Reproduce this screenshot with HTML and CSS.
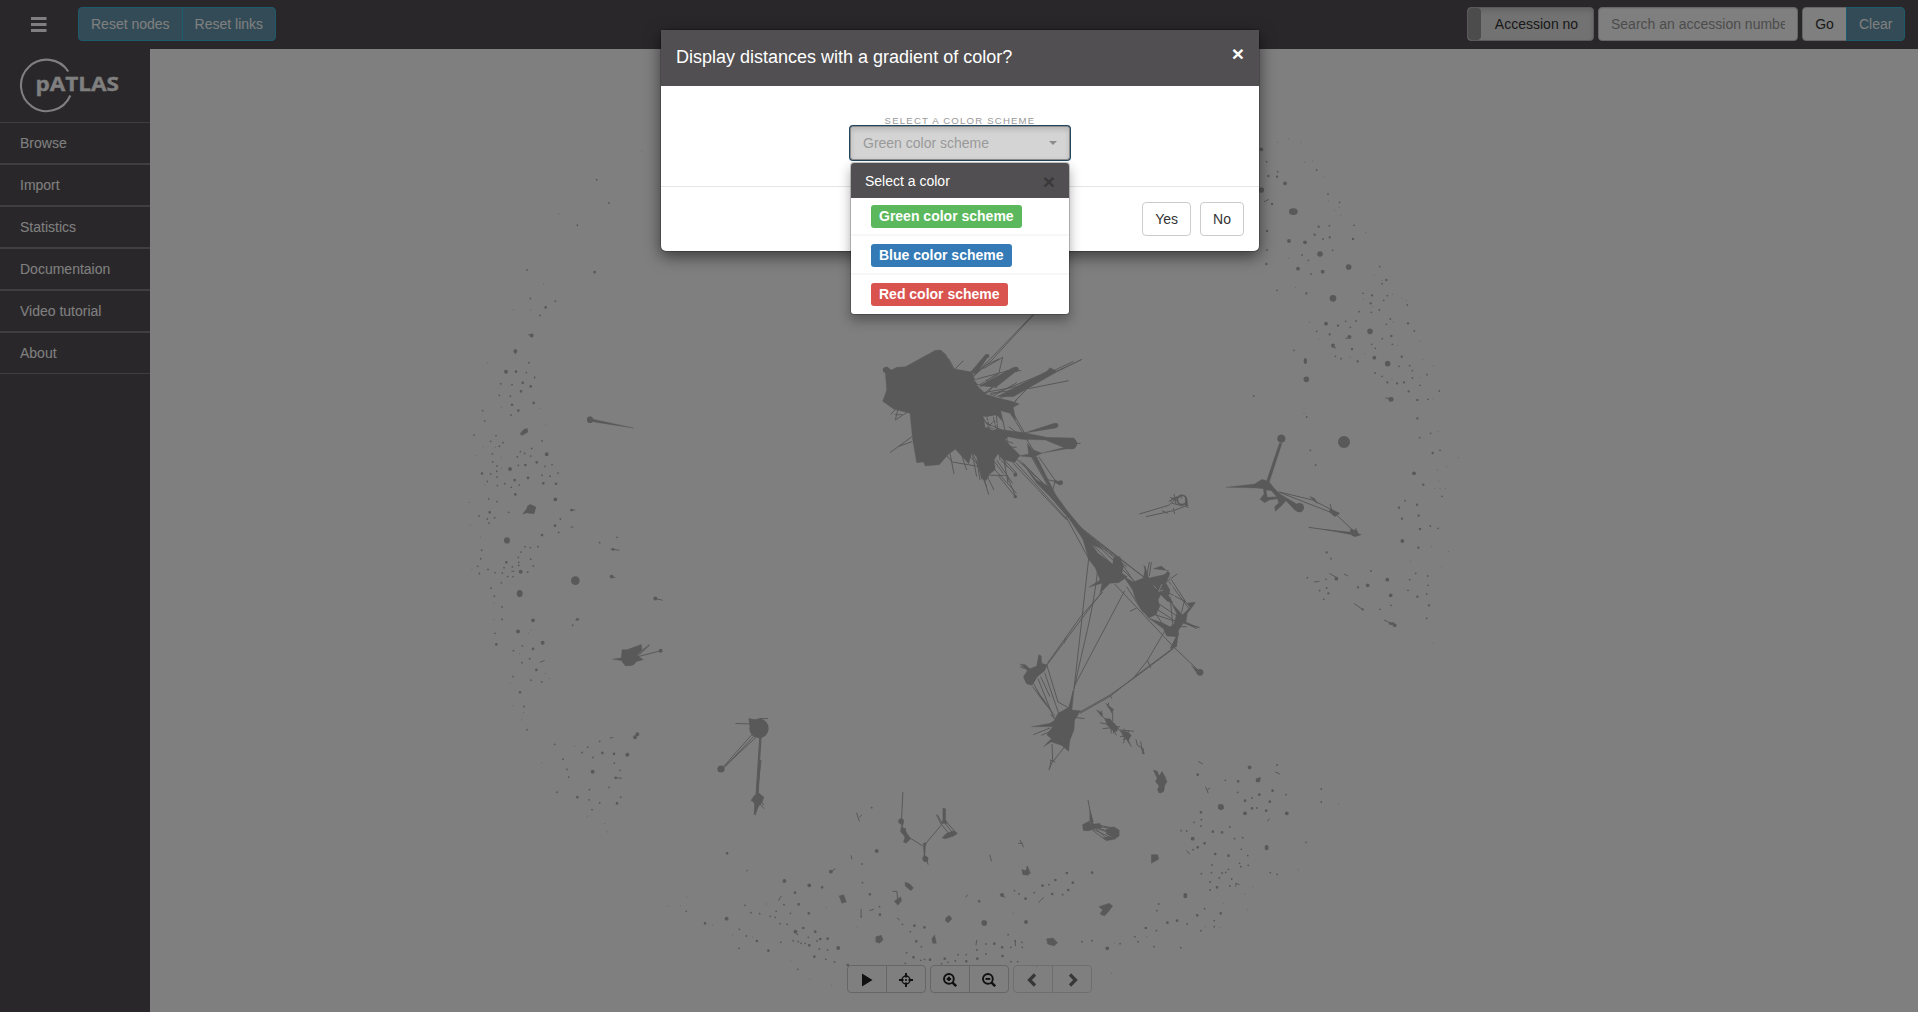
FILE: index.html
```html
<!DOCTYPE html>
<html lang="en">
<head>
<meta charset="utf-8">
<title>pATLAS</title>
<link rel="stylesheet" href="styles.css">
</head>
<body>
<div class="app">
  <header class="navbar">
    <button class="menu-toggle" aria-label="Menu"><svg width="16" height="16" viewBox="0 0 16 16"><path d="M0 1.500h15.500M0 7.500h15.500M0 13.500h15.500" stroke="currentColor" stroke-width="3"/></svg></button>
    <div class="btn-group reset-group">
      <button class="btn btn-info">Reset nodes</button><button class="btn btn-info">Reset links</button>
    </div>
    <div class="search">
      <div class="toggle"><span class="toggle-handle"></span><span class="toggle-text">Accession no</span></div>
      <input class="search-input" placeholder="Search an accession number">
      <div class="btn-group"><button class="btn btn-default go">Go</button><button class="btn btn-info clear">Clear</button></div>
    </div>
  </header>
  <div class="main">
    <nav class="sidebar">
      <div class="brand">
        <svg width="104" height="60" viewBox="0 0 104 60">
          <path d="M49.300 15.500A25.700 25.700 0 1 0 51.300 39.500" fill="none" stroke="currentColor" stroke-width="2.100"/>
          <text class="logo-text" x="16.500" y="35" textLength="83.500" lengthAdjust="spacingAndGlyphs">pATLAS</text>
        </svg>
      </div>
      <a class="nav-item">Browse</a>
      <a class="nav-item">Import</a>
      <a class="nav-item">Statistics</a>
      <a class="nav-item">Documentaion</a>
      <a class="nav-item">Video tutorial</a>
      <a class="nav-item">About</a>
    </nav>
    <section class="graph-area">
      <svg class="graph" viewBox="150 49 1768 963">
        <!-- central plasmid cluster and its bridges -->
        <g transform="translate(870 300) scale(.33333)">
          <path class="blob" d="M38 208L50 200L64 210L80 202L106 200L196 151L212 150L228 164L250 206L306 216L316 244L326 262L350 284L384 294L426 304L448 312L430 322L438 366L420 340L392 332L400 366L380 345L340 350L346 384L386 388L464 398L530 412L612 414L622 430L612 446L590 446L526 420L454 418L414 410L404 420L450 466L434 488L398 478L384 462L372 480L376 508L360 522L348 542L334 536L326 502L320 470L306 456L296 492L286 480L256 448L234 464L208 494L166 498L160 486L140 488L128 420L120 340L72 328L38 304L50 270L46 220Z"/>
          <path class="blob" d="M300 218L346 164L357 166L320 222ZM330 258L430 202L446 208L380 260ZM380 290L530 214L540 203L560 213L584 202L636 178L560 216L430 290ZM460 400L552 370L564 376L558 384ZM512 460L600 438L606 444ZM450 480L500 540L540 560L590 630L640 690L700 750L640 720L600 660L540 590L500 550ZM446 468L476 462L472 430L486 448L516 460L490 472ZM500 470L560 590L600 645L560 600L484 466ZM554 540L578 548L570 556L552 546Z"/>
          <path class="blob" d="M628 680L684 760L728 792L732 772L750 770L760 800L756 820L772 830L746 848L720 850L690 880L696 850L656 862L690 840L676 804L656 778ZM760 828L790 846L820 834L826 800L836 834L882 824L896 812L850 806L874 798L900 820L888 850L900 870L896 888L910 910L892 904L872 884L864 900L870 918L858 944L836 954L812 926L796 896L788 870ZM836 954L880 970L900 980L912 972L920 940L902 906L938 944L960 922L950 910L976 906L972 914L952 940L948 966L988 984L940 970L926 990L920 1040L900 1046L918 1010L890 1008L880 986ZM974 1104L999 1116L996 1126L984 1124L964 1096Z"/>
          <path class="blob" d="M450 1092L466 1094L480 1106L500 1098L506 1064L514 1068L514 1090L532 1094L524 1112L502 1130L486 1156L470 1152L460 1130L472 1112ZM486 1158L520 1196L556 1250L516 1200ZM552 1262L564 1240L596 1222L612 1170L606 1230L632 1232L614 1260L612 1290L600 1320L596 1354L574 1336L544 1326L520 1340L544 1316L530 1304L548 1280L484 1280L540 1270Z"/>
          <g class="links">
            <path d="M488 45L300 240M494 41L362 184L306 232M398 172L340 206M398 172L386 222L330 260M388 176L346 196L310 228M280 182L252 210M236 176L254 210M596 242L486 264L360 280M636 178L380 300M610 184L430 270M440 204L330 290M454 212L410 212M440 248L350 300M380 222L330 254M434 304L470 268M430 430L400 420M440 442L398 440M126 410L60 458M126 425L84 440M116 334L76 360L84 326M62 344L78 326M96 344L74 344M240 460L252 522M230 466L246 486L330 500M340 530L356 584M352 530L372 570M360 526L408 526M384 526L436 590M408 520L438 592M380 480L428 550M392 480L440 526M400 470L414 548M438 488L588 654M430 490L590 660M440 478L520 550L520 570M460 490L558 590M506 470L556 542L548 570M528 538L574 548M484 470L570 620M416 380L470 420M398 360L416 440M430 340L464 400M438 366L496 460M378 330L390 480M350 320L366 500M320 480L330 540M270 450L290 510"/>
            <path d="M588 650L656 776L612 1168M600 660L744 774L890 990M622 676L800 850M624 676L840 846M620 676L730 770M626 684L820 830M630 690L770 800M636 700L780 850M684 800C670 940 640 1030 612 1168M764 872L612 1160M694 878L530 1096M698 876L632 950L532 1090M734 852L912 1042M770 860L820 938M838 786L830 830M844 786L838 828M822 796L834 836M922 822L888 846M898 830L950 910M896 844L960 930M880 870L946 905M870 914L936 958M864 930L920 966M856 944L932 970M900 890L910 990M944 900L928 962M926 1000L912 1040M912 1042L982 1108M912 1042L792 1132L722 1188L630 1240M910 1046L790 1136L718 1186L630 1236M886 990L832 1082L792 1132M832 1080L842 1104M720 1186L726 1196M588 1012L582 1030M504 1136L552 1256M524 1118L566 1240M530 1094L564 1206L600 1226M490 1150L516 1196M512 1130L540 1190M610 1170L594 1240M644 1256L600 1250M490 1304L540 1284M514 1306L550 1290M546 1332L548 1384L536 1410M584 1340L548 1386M542 1244L560 1260M556 1386L540 1380M450 1100L464 1106M510 1066L514 1090M780 934L800 924M940 966L980 986M956 974L988 982M920 980L950 980M812 840L890 830M830 850L900 870"/>
            <path d="M300 250L380 262L350 240M310 240L430 208M330 280L440 260M350 290L530 218M340 290L400 230M410 330L440 300M340 360L400 420L440 470M350 390L420 470M370 400L410 500M390 400L440 480M330 400L440 520M300 440L350 560M320 450L440 580M340 440L400 520M290 460L340 510M306 456L320 530M310 360L380 340M340 355L400 450M370 350L386 420M350 370L400 392M340 392L374 362M350 350L362 400M606 430L632 430"/>
          </g>
          <path class="holes" d="M340 350L356 354L352 366L366 362L374 374L382 370M344 372L356 378L366 390L378 386M322 258L326 254M334 222L312 244M320 246L344 244M850 856L860 866M876 852L866 874L880 870M900 832L914 892M920 900L934 940"/>
          <g class="node"><circle cx="604" cy="431" r="17"/><circle cx="438" cy="208" r="8"/><circle cx="558" cy="376" r="7"/><circle cx="572" cy="548" r="7"/><circle cx="436" cy="590" r="5"/><circle cx="48" cy="210" r="9"/><circle cx="436" cy="524" r="6"/><circle cx="352" cy="168" r="6"/><circle cx="740" cy="780" r="11"/><circle cx="990" cy="1117" r="10"/><circle cx="900" cy="995" r="12"/><circle cx="480" cy="1136" r="16"/></g>
          <g class="links">
            <path d="M808 642L896 616L930 586M828 650L910 632L952 616M876 632L894 640M910 624L914 642M896 604L936 586M900 592L926 604M912 582L918 612M932 584L934 596M906 610L940 618M946 588L948 620L956 622M900 604L920 590M904 596L930 590"/>
            <path d="M680 1230L696 1248L720 1270L744 1286L770 1312L784 1340M696 1232L690 1246M708 1210L728 1236L728 1264M716 1208L714 1222M724 1230L732 1228M690 1268L738 1278M698 1286L750 1280M706 1256L740 1306M720 1260L724 1300M734 1270L730 1300M750 1290L792 1294M762 1286L776 1330M750 1310L778 1306M760 1330L770 1300M778 1290L760 1320M798 1318L802 1336L820 1346L820 1362M812 1324L816 1350"/>
          </g>
          <circle class="ring" cx="936" cy="600" r="14"/>
          <path class="blob" d="M682 1230L698 1240L696 1250ZM710 1212L730 1228L726 1240ZM704 1256L720 1256L732 1270L746 1284L738 1296L726 1290L712 1276ZM752 1292L774 1296L784 1306L774 1324L760 1310ZM814 1342L824 1362L818 1362ZM850 1410L862 1414L868 1430L876 1414L882 1434L890 1444L884 1458L882 1472L870 1480L862 1470L868 1456L856 1444L862 1436ZM946 592L952 604L954 618L944 614L950 602Z"/>
        </g>
        <!-- right hand satellites -->
        <g transform="translate(1130 130) scale(.33333)">
          <path class="blob" d="M288 1072L374 1062L396 1048L410 1052L448 940L456 940L418 1056L432 1074L450 1092L470 1104L500 1122L496 1142L468 1112L454 1128L436 1144L434 1130L446 1118L442 1106L418 1110L404 1118L390 1108L402 1092L400 1076L376 1074ZM408 1080L412 1102L440 1100L424 1082ZM540 1100L552 1104L564 1120ZM600 1136L630 1150L614 1160L598 1146ZM580 1198L660 1206L662 1196L676 1202L678 1194L684 1210L694 1214L676 1220L664 1214Z" fill-rule="evenodd"/>
          <path class="links" d="M600 1122L606 1142L670 1202M446 1086L610 1150M448 1086L548 1110L610 1142M536 1192L664 1210M672 1420L700 1440M762 1470L796 1486M540 1100L562 1120M598 1330L622 1344M552 1356L568 1354M402 216L416 208M646 626L664 620M604 650L618 654M642 1332L654 1338M766 804L784 806"/>
          <g class="node"><circle cx="454" cy="926" r="12.500"/><circle cx="642" cy="936" r="18"/><ellipse cx="490" cy="245" rx="13" ry="10"/><ellipse cx="526" cy="693" rx="5" ry="9"/><ellipse cx="783" cy="808" rx="8" ry="7"/><circle cx="609" cy="505" r="10"/><circle cx="508" cy="1133" r="14"/><circle cx="673" cy="1209" r="10"/><ellipse cx="785" cy="1481" rx="9" ry="4"/></g>
          <path class="dot d6" d="M656 411h.1M720 604h.1M570 372h.1M529 748h.1M773 701h.1M394 180h.1"/>
          <path class="dot d4" d="M465 160h.1M477 333h.1M504 416h.1M525 337h.1M578 425h.1M733 683h.1M852 1030h.1M817 1233h.1M588 581h.1M772 1349h.1M394 58h.1M713 1366h.1M609 646h.1M782 1396h.1M658 621h.1M619 1346h.1M794 1486h.1"/>
          <path class="dot d2" d="M415 138h.1M441 140h.1M426 222h.1M411 303h.1M409 402h.1M566 290h.1M554 314h.1M599 322h.1M669 327h.1M529 490h.1M599 613h.1M624 587h.1M666 657h.1M683 694h.1M722 520h.1M784 618h.1M815 680h.1M772 757h.1M801 760h.1M822 757h.1M836 784h.1M862 810h.1M862 865h.1M880 1064h.1M861 1124h.1M866 1157h.1M816 1166h.1M807 1133h.1M870 1197h.1M865 1253h.1M590 1267h.1M684 1372h.1M862 1400h.1M897 1426h.1M595 1390h.1M908 969h.1M769 450h.1M726 496h.1M834 580h.1M698 1438h.1"/>
          <path class="dot d1" d="M410 95h.1M443 125h.1M560 120h.1M594 192h.1M629 217h.1M598 287h.1M672 286h.1M608 361h.1M411 360h.1M516 375h.1M535 391h.1M543 432h.1M441 481h.1M749 410h.1M756 461h.1M699 490h.1M772 497h.1M761 511h.1M832 525h.1M687 545h.1M724 547h.1M748 540h.1M781 567h.1M769 583h.1M678 573h.1M647 574h.1M661 592h.1M560 604h.1M853 603h.1M757 626h.1M787 643h.1M736 655h.1M725 643h.1M616 679h.1M633 686h.1M492 661h.1M807 709h.1M839 707h.1M847 722h.1M891 734h.1M735 729h.1M756 739h.1M847 744h.1M870 766h.1M928 783h.1M894 808h.1M530 861h.1M371 798h.1M541 961h.1M557 1005h.1M902 910h.1M869 923h.1M930 961h.1M936 1099h.1M825 1112h.1M901 1188h.1M924 1195h.1M603 1286h.1M723 1323h.1M857 1330h.1M839 1349h.1M893 1338h.1M894 1366h.1M834 1381h.1M890 1392h.1M569 1382h.1M590 1374h.1M581 1408h.1M532 1343h.1M588 1348h.1M750 1438h.1M783 1426h.1M890 1465h.1M579 327h.1"/>
          <path class="dot d0" d="M512 38h.1M443 37h.1M524 97h.1M476 27h.1M548 94h.1M583 142h.1M596 214h.1M614 240h.1M627 232h.1M632 256h.1M707 308h.1M733 436h.1M756 451h.1M497 473h.1M788 493h.1M815 505h.1M828 512h.1M728 530h.1M538 577h.1M700 508h.1M869 634h.1M878 688h.1M910 708h.1M803 646h.1M566 628h.1M704 671h.1M660 682h.1M870 743h.1M522 851h.1M910 806h.1M924 905h.1M985 983h.1M950 1010h.1M922 1020h.1M926 1053h.1M915 1075h.1M930 1075h.1M946 1076h.1M905 1250h.1M956 1265h.1M841 1294h.1M935 1310h.1M476 385h.1M789 577h.1M786 747h.1M910 1540h.1"/>
        </g>
        <!-- left hand satellites -->
        <g transform="translate(460 140) scale(.33333 .44643)">
          <path class="blob" d="M382 622L392 619L402 626L440 632L520 645L440 636L398 631L384 632ZM458 1163L484 1160L486 1142L500 1142L544 1130L546 1142L530 1154L550 1164L530 1168L520 1176L496 1178L484 1166ZM188 838L204 822L210 816L228 822L222 838L208 834ZM180 658L192 648L202 646L204 654L186 662ZM866 1296L884 1298L890 1310L870 1314ZM890 1466L884 1468L874 1478L884 1486L882 1512L898 1490L906 1484L912 1472L898 1464Z"/>
          <path class="links" d="M530 1158L568 1132M520 1160L602 1144M530 1154L568 1130M826 1307L870 1308M878 1330L790 1404M884 1334L792 1406M888 1338L796 1402M900 1330L888 1470M904 1330L892 1470M902 1330L890 1470M898 1296L924 1296M892 1480L912 1498M452 916L478 919M580 1026L608 1031M450 1340L460 1338M522 1340L536 1330M466 1428L486 1430M240 1170L254 1166M450 978L466 980M330 829L346 829M205 436L216 438M166 468L166 480M332 867L341 867M346 1075L358 1073M154 966L164 966"/>
          <g class="node"><ellipse cx="390" cy="627" rx="9" ry="7"/><ellipse cx="346" cy="987" rx="13" ry="10"/><ellipse cx="141" cy="897" rx="9" ry="7"/><ellipse cx="179" cy="1016" rx="9" ry="8"/><ellipse cx="211" cy="827" rx="11" ry="10"/><ellipse cx="508" cy="1162" rx="21" ry="16"/><ellipse cx="897" cy="1318" rx="29" ry="22"/><ellipse cx="783" cy="1409" rx="11" ry="8"/><ellipse cx="890" cy="1476" rx="10" ry="9"/></g>
          <path class="dot d4" d="M215 438h.1M166 473h.1M150 737h.1M219 1076h.1M174 1101h.1M248 1126h.1M398 1415h.1M260 704h.1M286 805h.1M182 967h.1M532 1331h.1M502 1377h.1M602 1144h.1M138 519h.1M455 978h.1M586 1027h.1M525 1338h.1"/>
          <path class="dot d3" d="M404 296h.1M257 375h.1M168 519h.1M221 589h.1M175 606h.1M196 728h.1M204 757h.1M164 762h.1M166 794h.1M66 747h.1M230 722h.1M288 770h.1M250 769h.1M285 864h.1M89 834h.1M246 885h.1M139 946h.1M180 1237h.1M427 1373h.1M462 1375h.1M352 1472h.1M183 563h.1M212 552h.1M109 1130h.1M229 1187h.1M335 829h.1M471 1486h.1M467 1429h.1M352 1074h.1M459 917h.1M188 544h.1M156 593h.1M219 1140h.1"/>
          <path class="dot d1" d="M410 89h.1M447 141h.1M352 191h.1M201 291h.1M211 355h.1M286 361h.1M240 393h.1M207 499h.1M199 521h.1M224 532h.1M122 546h.1M156 548h.1M118 572h.1M151 574h.1M153 616h.1M68 606h.1M74 629h.1M42 661h.1M108 662h.1M92 675h.1M129 678h.1M118 686h.1M246 674h.1M215 691h.1M181 698h.1M194 702h.1M212 708h.1M172 710h.1M97 703h.1M98 721h.1M175 729h.1M111 730h.1M92 748h.1M110 742h.1M111 755h.1M82 765h.1M134 770h.1M112 774h.1M154 778h.1M178 773h.1M255 731h.1M276 727h.1M294 746h.1M246 751h.1M270 753h.1M86 804h.1M111 810h.1M146 834h.1M57 842h.1M82 849h.1M104 846h.1M87 858h.1M301 849h.1M296 879h.1M65 919h.1M62 938h.1M53 955h.1M58 971h.1M84 962h.1M105 969h.1M127 970h.1M132 958h.1M157 956h.1M175 935h.1M176 946h.1M176 953h.1M183 923h.1M195 911h.1M211 913h.1M234 911h.1M212 939h.1M220 954h.1M203 968h.1M143 978h.1M159 978h.1M124 992h.1M93 1004h.1M103 1022h.1M126 1046h.1M126 1074h.1M105 1105h.1M160 1144h.1M187 1133h.1M186 1171h.1M209 1162h.1M159 1202h.1M213 1210h.1M245 1214h.1M192 1269h.1M201 1321h.1M284 1354h.1M419 902h.1M471 890h.1M338 1087h.1M419 1347h.1M383 1360h.1M366 1372h.1M399 1383h.1M309 1387h.1M321 1410h.1M326 1427h.1M463 1396h.1M480 1412h.1M447 1450h.1M482 1472h.1M419 1485h.1M396 1500h.1M387 1478h.1M388 1455h.1M291 1461h.1"/>
          <path class="dot d0" d="M297 166h.1M250 322h.1M160 380h.1M212 381h.1M82 499h.1M124 599h.1M241 601h.1M257 639h.1M49 707h.1M69 687h.1M106 688h.1M124 711h.1M124 736h.1M74 773h.1M28 812h.1M31 863h.1M36 961h.1M61 890h.1M102 1038h.1M102 1074h.1M213 1098h.1M205 1105h.1M178 1151h.1M256 1195h.1M267 1206h.1M151 1217h.1M160 1267h.1M190 1283h.1M184 1299h.1M344 1358h.1M245 1395h.1M381 1515h.1M434 1531h.1M443 1550h.1M545 24h.1"/>
        </g>
        <!-- lower rim -->
        <g transform="translate(660 760) scale(.45918 .33333)">
          <path class="blob" d="M212 94L216 100L222 112L220 128L214 136L208 166L206 130L200 120L208 110ZM522 178L528 176L530 190L528 200L536 216L546 236L536 250L530 246L534 232L524 214L526 196ZM573 250L580 248L578 262L577 286L584 296L580 306L574 302L572 294L575 284ZM616 144L622 146L622 180L626 190L614 190L616 180ZM624 220L640 212L648 220L640 228L622 236L614 234ZM936 150L944 186L936 190ZM920 194L934 184L946 192L958 190L962 204L946 206L934 212H922ZM972 208L988 200L1000 210V228L990 238L972 242L966 232L984 230L972 222ZM788 328L796 334L800 318L806 336L802 346L790 344ZM956 440L978 430L986 438L976 456L968 468L958 462L964 450ZM534 366L544 372L552 384L546 392L534 378ZM510 424L524 410L526 422L518 436ZM1076 30L1086 48L1094 36L1100 50L1104 66L1096 78V96L1086 98L1088 80L1080 66L1084 52ZM842 536L856 534L866 548L858 558L844 552ZM622 474L630 466L636 476L628 488L622 484ZM702 482L712 484L710 496L702 494ZM470 530L482 526L486 540L478 550L470 546ZM390 408L400 404L406 426L396 430ZM1070 284L1084 284L1086 298L1070 310ZM1216 134L1226 134L1228 146L1220 150ZM1298 56L1308 52L1306 66L1298 66ZM592 536L598 524L602 550L594 550Z" fill-rule="evenodd"/>
          <path class="links" d="M220 0L212 100M218 0L214 96M214 110L226 136M206 112L198 124M529 96L526 180M540 230L572 258M578 252L612 196M580 296L584 314M620 180L642 214M616 182L636 216M602 164L612 192L630 222M604 164L614 190M612 196L618 184M532 232L542 236M932 120L942 190M428 158L434 184M434 172L440 164M784 240L792 262M780 250L790 250M718 284L722 304M506 394L516 394L518 426M368 338L382 326M258 422L264 408M740 402L752 412M824 428L836 412M1188 80L1194 100M1192 90L1198 84M1172 4L1182 12M438 468V446M456 452L466 448M690 540L688 556M416 286L418 298M1146 272L1154 282M1340 36L1350 42M1322 184L1328 176M666 412L670 404M774 542V558M1254 380V370L1262 374M790 330L808 340M800 318V344M516 474L522 480M852 0L848 28M960 200L990 208M948 194L988 204M938 206L970 240M944 208L980 232M950 204L990 224M956 206L980 214M946 202L968 230M188 334L192 329"/>
          <path class="dot d6" d="M1221 141h.1M706 489h.1M578 297h.1M933 203h.1M213 120h.1M525 184h.1M530 212h.1M1077 293h.1"/>
          <path class="dot d4" d="M1144 405h.1M1144 409h.1M1321 261h.1M1321 265h.1M325 376h.1M388 564h.1M472 273h.1M1160 236h.1M145 476h.1M271 363h.1M974 565h.1M372 335h.1M745 405h.1M1284 22h.1M1274 160h.1M1365 160h.1M797 486h.1M295 515h.1"/>
          <path class="dot d3" d="M146 280h.1M236 572h.1M211 543h.1M324 460h.1M353 382h.1M294 398h.1M457 403h.1M576 502h.1M554 497h.1M558 544h.1M728 551h.1M745 562h.1M941 338h.1M899 368h.1M886 339h.1M861 360h.1M854 402h.1M833 377h.1M889 390h.1M796 416h.1M1171 44h.1M1259 64h.1M1334 92h.1M1274 122h.1M1328 125h.1M1178 157h.1M1204 215h.1M1224 217h.1M1238 287h.1M1209 282h.1M1171 262h.1M1058 504h.1M1221 460h.1M1213 382h.1M1126 482h.1M1105 488h.1M302 433h.1M338 515h.1M312 504h.1M325 556h.1M336 590h.1M365 536h.1M349 537h.1M98 490h.1M695 424h.1M667 604h.1M691 596h.1M746 588h.1M620 596h.1M552 592h.1M588 599h.1M479 464h.1M409 615h.1M1320 152h.1M1289 145h.1M1305 104h.1M1186 250h.1M1170 466h.1"/>
          <path class="dot d1" d="M57 454h.1M185 436h.1M198 458h.1M217 461h.1M253 454h.1M240 469h.1M251 472h.1M284 460h.1M270 434h.1M261 491h.1M277 493h.1M173 508h.1M188 528h.1M172 565h.1M263 547h.1M290 542h.1M301 545h.1M307 550h.1M316 550h.1M299 523h.1M323 532h.1M342 543h.1M365 570h.1M361 598h.1M380 606h.1M347 567h.1M300 628h.1M441 368h.1M440 312h.1M461 143h.1M438 470h.1M478 440h.1M545 515h.1M528 493h.1M537 578h.1M569 560h.1M534 610h.1M576 598h.1M568 601h.1M613 611h.1M627 607h.1M643 603h.1M649 584h.1M667 584h.1M710 582h.1M710 552h.1M690 570h.1M758 524h.1M773 542h.1M788 547h.1M789 562h.1M764 562h.1M764 605h.1M779 605h.1M772 392h.1M782 402h.1M815 398h.1M847 374h.1M877 404h.1M919 545h.1M941 542h.1M1002 551h.1M1041 545h.1M1034 530h.1M1076 560h.1M1134 563h.1M1082 452h.1M1086 432h.1M1081 512h.1M1148 492h.1M1186 446h.1M1207 482h.1M1207 500h.1M1178 512h.1M1163 187h.1M1179 179h.1M1178 198h.1M1147 213h.1M1135 212h.1M1251 236h.1M1269 233h.1M1241 201h.1M1266 268h.1M1262 310h.1M1265 320h.1M1238 328h.1M1245 357h.1M1232 337h.1M1224 339h.1M1218 354h.1M1201 338h.1M1202 315h.1M1179 341h.1M1198 366h.1M1198 390h.1M1241 378h.1M1280 287h.1M1281 316h.1M1329 338h.1M1344 343h.1M1407 247h.1M1440 87h.1M1440 126h.1M1231 61h.1M1258 97h.1M1289 114h.1M1344 15h.1M1363 104h.1M1300 144h.1M1161 269h.1"/>
          <path class="dot d0" d="M18 438h.1M44 437h.1M58 411h.1M114 495h.1M158 525h.1M233 432h.1M201 531h.1M285 603h.1M326 658h.1M374 676h.1M362 442h.1M430 500h.1M1478 133h.1M1390 329h.1M1291 380h.1M1274 402h.1M1228 430h.1M1188 500h.1M1220 503h.1M983 640h.1M820 620h.1M770 460h.1M990 549h.1M1060 530h.1M1280 450h.1"/>
        </g>
      </svg>
      <div class="controls">
        <div class="btn-group">
          <button class="ctl"><svg width="14" height="14" viewBox="0 0 14 14"><path d="M2 .5L12.500 7L2 13.500Z" fill="currentColor"/></svg></button>
          <button class="ctl"><svg width="14" height="14" viewBox="0 0 14 14"><path d="M7 0v4.500M7 9.500v4.500M0 7h4.500M9.500 7h4.500" stroke="currentColor" stroke-width="1.900"/><circle cx="7" cy="7" r="4" fill="none" stroke="currentColor" stroke-width="1.400"/><path d="M7 6v2M6 7h2" stroke="currentColor"/></svg></button>
        </div>
        <div class="btn-group">
          <button class="ctl"><svg width="14" height="14" viewBox="0 0 14 14"><circle cx="5.900" cy="5.900" r="4.900" fill="none" stroke="currentColor" stroke-width="1.900"/><path d="M9.300 9.300L13.200 13.200" stroke="currentColor" stroke-width="2.500"/><path d="M5.900 3.700v4.400M3.700 5.900h4.400" stroke="currentColor" stroke-width="2"/></svg></button>
          <button class="ctl"><svg width="14" height="14" viewBox="0 0 14 14"><circle cx="5.900" cy="5.900" r="4.900" fill="none" stroke="currentColor" stroke-width="1.900"/><path d="M9.300 9.300L13.200 13.200" stroke="currentColor" stroke-width="2.500"/><path d="M3.500 5.900h4.800" stroke="currentColor" stroke-width="2"/></svg></button>
        </div>
        <div class="btn-group disabled">
          <button class="ctl"><svg width="14" height="14" viewBox="0 0 14 14"><path d="M9 1.500L3.500 7L9 12.500" fill="none" stroke="currentColor" stroke-width="3.200"/></svg></button>
          <button class="ctl"><svg width="14" height="14" viewBox="0 0 14 14"><path d="M5 1.500L10.500 7L5 12.500" fill="none" stroke="currentColor" stroke-width="3.200"/></svg></button>
        </div>
      </div>
    </section>
  </div>
</div>
<div class="backdrop">
  <div class="modal">
    <div class="modal-header"><h4 class="modal-title">Display distances with a gradient of color?</h4><button class="close">×</button></div>
    <div class="modal-body">
      <label class="field-label">Select a color scheme</label>
      <div class="select">
        <button class="select-btn">Green color scheme<span class="caret"></span></button>
        <div class="dropdown">
          <div class="dropdown-header">Select a color<span class="dropdown-close">×</span></div>
          <div class="option"><span class="label green">Green color scheme</span></div>
          <div class="option"><span class="label blue">Blue color scheme</span></div>
          <div class="option"><span class="label red">Red color scheme</span></div>
        </div>
      </div>
    </div>
    <div class="modal-footer"><button class="btn btn-default">Yes</button><button class="btn btn-default">No</button></div>
  </div>
</div>
</body>
</html>
```
FILE: styles.css
```css
* { box-sizing: border-box; }
body { margin: 0; font: 14px/20px "Liberation Sans", Arial, sans-serif; color: #333; overflow: hidden; }
button, input { font: inherit; margin: 0; }
.app { height: 100vh; display: flex; flex-direction: column; background: #fff; }
.navbar { height: 49px; flex: none; background: #524f54; display: flex; align-items: flex-start; padding: 7px 13px 0 0; }
.menu-toggle { margin: 10px 0 0 31px; padding: 0; border: 0; background: none; color: #fff; width: 16px; height: 16px; display: block; }
.menu-toggle svg { display: block; }
.btn-group { display: flex; }
.reset-group { margin-left: 31px; }
.btn { height: 34px; padding: 6px 12px; border: 1px solid #ccc; border-radius: 4px; background: #fff; color: #333; white-space: nowrap; }
.btn-info { background: #6496ac; border-color: #38b4d8; color: #fff; }
.btn-group .btn:first-child { border-radius: 4px 0 0 4px; }
.btn-group .btn:last-child { border-radius: 0 4px 4px 0; margin-left: -1px; }
.search { margin-left: auto; display: flex; gap: 4px; }
.toggle { width: 127px; height: 34px; border: 1px solid #b4b4b4; border-radius: 4px; background: #e4e4e4; display: flex; box-shadow: inset 0 3px 5px rgba(0,0,0,.125); }
.toggle-handle { width: 13px; background: #989898; border-radius: 4px; }
.toggle-text { flex: 1; text-align: center; padding: 6px 1px 0 0; }
.search-input { width: 200px; height: 34px; padding: 6px 12px; border: 1px solid #ccc; border-radius: 4px; box-shadow: inset 0 1px 1px rgba(0,0,0,.075); background: #fff; }
.search-input::placeholder { color: #999; opacity: 1; }
.go { width: 45px; padding: 6px 11px; }
.clear { width: 59px; }
.main { flex: 1; display: flex; min-height: 0; }
.sidebar { width: 150px; flex: none; background: #524f54; color: #fff; }
.brand { height: 73px; padding: 7px 0 0 19px; }
.logo-text { font: 700 19.5px "Open Sans", "Noto Sans", sans-serif; fill: currentColor; stroke: currentColor; stroke-width: .3px; }
.nav-item { display: block; padding: 10px 20px; border: solid #7f7c81; border-width: 1px 0; }
.graph-area { flex: 1; display: grid; min-width: 0; }
.graph, .controls { grid-area: 1 / 1; }
.graph { width: 100%; height: 100%; display: block; }
.blob, .node { fill: #b2b2b2; }
.blob { stroke: #b2b2b2; stroke-width: 1; }
.links, .dot, .holes, .ring { fill: none; stroke: #b2b2b2; }
.links, .links path, .dot, .holes { vector-effect: non-scaling-stroke; stroke-width: 1px; }
.ring { stroke-width: 5px; }
.holes { stroke: #fff; stroke-width: .9px; }
.dot { stroke-linecap: round; }
.d6 { stroke-width: 5.6px; }
.d4 { stroke-width: 3.9px; }
.d3 { stroke-width: 2.7px; }
.d2 { stroke-width: 2.4px; }
.d1 { stroke-width: 1.8px; }
.d0 { stroke-width: .8px; }
.controls { align-self: end; justify-self: start; margin: 0 0 19px 697px; display: flex; gap: 4px; }
.ctl { width: 40px; height: 28px; padding: 1px 0 0; border: 1px solid #ccc; background: none; color: #222; display: grid; place-items: center; }
.ctl svg { display: block; }
.controls .btn-group { border-radius: 4px; }
.ctl:first-child { border-radius: 4px 0 0 4px; }
.ctl:last-child { border-radius: 0 4px 4px 0; margin-left: -1px; }
.disabled { opacity: .65; }
.backdrop { position: absolute; inset: 0; background: rgba(0,0,0,.5); }
.modal { width: 600px; margin: 29px auto 0; transform: translateX(1px); border: 1px solid rgba(0,0,0,.2); border-radius: 6px; background: #fff; background-clip: padding-box; box-shadow: 0 5px 15px rgba(0,0,0,.5); }
.modal-header { height: 56px; padding: 15px; background: #514f52; color: #fff; display: flex; justify-content: space-between; }
.modal-title { margin: 0; font-size: 18px; font-weight: 500; line-height: 25px; }
.close { padding: 0; border: 0; background: none; color: #fff; font-weight: 700; font-size: 21px; line-height: 17px; height: 17px; }
.modal-body { height: 100px; padding: 27px 0 0; display: flex; flex-direction: column; align-items: center; }
.field-label { font-size: 9.6px; line-height: 13px; letter-spacing: 1.2px; text-transform: uppercase; color: #999; padding-top: 1px; height: 13px; }
.select { width: 220px; position: relative; }
.select-btn { width: 220px; height: 34px; padding: 0 12px; display: flex; align-items: center; justify-content: space-between; border: 1px solid #8c8c8c; border-radius: 3px; background: #d4d4d4; color: #999; box-shadow: inset 0 3px 5px rgba(0,0,0,.125), 0 0 0 1px #24465c; outline: none; }
.caret { border: 4px solid transparent; border-top-color: #8c8c8c; border-bottom: 0; }
.dropdown { position: absolute; top: 36px; left: 0; width: 220px; height: 153px; border: 1px solid rgba(0,0,0,.2); border-radius: 4px; background: #fff; background-clip: padding-box; box-shadow: 0 6px 12px rgba(0,0,0,.3); }
.dropdown-header { height: 35px; padding: 8px 14px 7px; display: flex; justify-content: space-between; background: #514f52; color: #fff; border-radius: 3px 3px 0 0; }
.dropdown-close { font-size: 21px; font-weight: 700; line-height: 22px; color: #3a383b; }
.option { height: 36px; padding: 7px 20px 6px; }
.option + .option { height: 39px; padding-top: 8px; border-top: 2px solid #f7f7f7; }
.label { display: block; width: fit-content; height: 23px; line-height: 23px; padding: 0 8px; border-radius: 3px; color: #fff; font-weight: 700; }
.green { background: #5cb85c; }
.blue { background: #337ab7; }
.red { background: #d9534f; }
.modal-footer { height: 65px; padding: 15px; border-top: 1px solid #e5e5e5; display: flex; justify-content: flex-end; gap: 9px; }
```
